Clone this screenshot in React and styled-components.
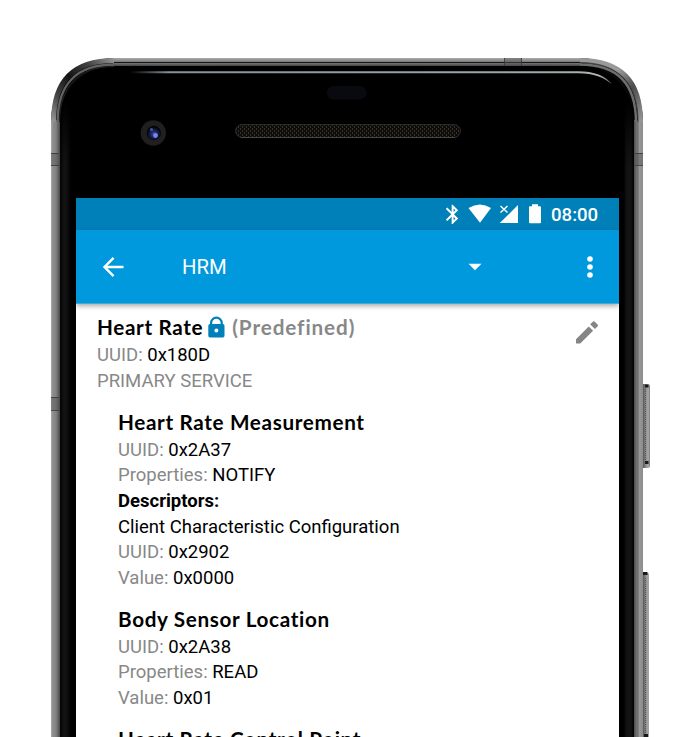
import React from "react";
import styled, { createGlobalStyle } from "styled-components";

const GlobalStyle = createGlobalStyle`
  * { box-sizing: border-box; }
  body { margin: 0; background: #fff; overflow: hidden; }
`;

const Stage = styled.main`
  width: 700px;
  height: 737px;
  padding: 58px 0 0 51px;
  overflow: hidden;
  background: #fff;
  font-family: Roboto, "Liberation Sans", sans-serif;
`;

const Phone = styled.div`
  position: relative;
  width: 592px;
  height: 760px;
`;

const Hull = styled.div`
  height: 100%;
  padding: 8px 9px 0;
  border-radius: 63px 63px 0 0;
  background:
    linear-gradient(to bottom, #aaa 0, #888 3px, #777 4px, #151515 4px, #151515 5px, #777 5px, #444 8px, transparent 8px) 62px 0 / 468px 8px no-repeat,
    linear-gradient(to right, #aaa 0, #8b8b8b 2px, #828282 5px, #656565 7px, #484848 9px, transparent 9px, transparent 583px, #4c4c4c 583px, #777 586px, #666 587px, #999 588px, #8c8c8c 592px) 0 62px no-repeat,
    #080808;
`;

const Glass = styled.div`
  height: 100%;
  padding: 132px 16px 0;
  border-radius: 54px 54px 0 0;
  background:
    linear-gradient(to bottom, #000 30px, transparent 100px),
    linear-gradient(to right, #090909, #171717 4px, #101010 7px, #000 11px, #000 564px, #111 566px, #181816 571px, #050505 574px);
  box-shadow: inset 0 6px 7px #000;
`;

const HardwareArt = styled.svg`
  position: absolute;
  left: -51px;
  top: -58px;
  pointer-events: none;
`;

const Screen = styled.section`
  width: 543px;
  height: 620px;
  overflow: hidden;
  background: #fff;
`;

const StatusBar = styled.div`
  display: flex;
  height: 32px;
  align-items: center;
  justify-content: flex-end;
  padding-right: 20px;
  background: #0080b9;
  color: #fff;
`;

const StatusIcons = styled.svg`
  display: block;
  width: 100px;
  height: 32px;
`;

const Clock = styled.time`
  width: 48px;
  margin-left: 7px;
  padding-top: 2px;
  font-size: 18.6px;
  font-weight: 500;
  white-space: nowrap;
`;

const Toolbar = styled.header`
  display: flex;
  height: 74px;
  align-items: center;
  padding: 0 21px 0 25px;
  background: #0099dd;
  border-bottom: 1px solid #45a9d6;
  box-shadow: 0 2px 5px rgba(0, 0, 0, 0.35);
  color: #fff;
`;

const ToolIcon = styled.svg`
  display: block;
  flex: none;
  width: ${(p) => p.$w}px;
  height: 24px;
  fill: currentColor;
`;

const Spinner = styled.div`
  display: flex;
  flex: 1;
  align-items: center;
  justify-content: space-between;
  margin: 0 100px 0 57px;
  font-size: 20.3px;
`;

const Content = styled.div`
  padding: 10px 21px 0;
`;

const Service = styled.div`
  display: flex;
  justify-content: space-between;
  margin-bottom: 15.3px;
`;

const Group = styled.article`
  margin: 0 0 15px 21px;
`;

const Heading = styled.h2`
  display: flex;
  align-items: center;
  height: 28px;
  padding-bottom: 1px;
  margin: 0;
  color: #000;
  font-family: Lato, "Open Sans", sans-serif;
  font-size: 20.7px;
  font-weight: 700;
  letter-spacing: 0.65px;
  line-height: 27px;
  white-space: nowrap;
`;

const Predefined = styled.span`
  color: #888;
  letter-spacing: 0.9px;
`;

const Lock = styled.svg`
  width: 17px;
  height: 22px;
  margin: 0 7px 2px 5px;
  fill: #0080b9;
`;

const Line = styled.div`
  height: 25.7px;
  color: ${(p) => (p.$muted ? "#888" : "#000")};
  font-size: 18.5px;
  font-weight: ${(p) => (p.$bold ? 700 : 400)};
  line-height: 26px;
  white-space: nowrap;
`;

const Label = styled.span`
  color: #888;
`;

const Pencil = styled.svg`
  width: 23px;
  height: 23px;
  margin: 7px -1px 0 0;
  fill: #858585;
`;

function Field({ label, value }) {
  return <Line><Label>{label}:</Label> {value}</Line>;
}

function Hardware() {
  return (
    <HardwareArt width="700" height="737" viewBox="0 0 700 737" fill="none" aria-hidden="true">
      <defs>
        <linearGradient id="cornerL" x1="51" y1="121" x2="114" y2="58" gradientUnits="userSpaceOnUse">
          <stop stopColor="#999" /><stop offset=".25" stopColor="#444" /><stop offset=".5" stopColor="#141414" /><stop offset=".75" stopColor="#444" /><stop offset="1" stopColor="#999" />
        </linearGradient>
        <linearGradient id="cornerR" x1="580" y1="58" x2="643" y2="121" gradientUnits="userSpaceOnUse">
          <stop stopColor="#999" /><stop offset=".4" stopColor="#999" /><stop offset=".65" stopColor="#4c4c4c" /><stop offset="1" stopColor="#999" />
        </linearGradient>
        <linearGradient id="glare" x1="130" y1="0" x2="613" y2="0" gradientUnits="userSpaceOnUse">
          <stop stopColor="#879198" stopOpacity="0" /><stop offset=".08" stopColor="#879198" /><stop offset=".88" stopColor="#a1a9ac" /><stop offset=".97" stopColor="#b0b5b6" /><stop offset="1" stopColor="#666" />
        </linearGradient>
        <linearGradient id="key" x1="643" y1="0" x2="650" y2="0" gradientUnits="userSpaceOnUse">
          <stop stopColor="#555" /><stop offset=".4" stopColor="#8c8c8c" /><stop offset=".75" stopColor="#aaa" /><stop offset="1" stopColor="#777" />
        </linearGradient>
        <radialGradient id="lens" cx="154" cy="134" r="7" gradientUnits="userSpaceOnUse">
          <stop stopColor="#3b4a98" /><stop offset=".55" stopColor="#17204e" /><stop offset="1" stopColor="#030408" />
        </radialGradient>
        <pattern id="mesh" width="4" height="4" patternUnits="userSpaceOnUse">
          <path d="M0 0h4v4H0z" fill="#0d0c0b" /><path d="M0 0h1v2H0zM2 2h1v2H2z" fill="#363129" />
        </pattern>
      </defs>
      <path d="M53.5 122C53.5 81 74 60.5 114 60.5" stroke="url(#cornerL)" strokeWidth="5" />
      <path d="M57.6 122C57.6 84 77 64.5 114 64.5" stroke="#626262" strokeWidth="2.4" />
      <path d="M59.5 122C59.8 86 79 66.5 114 66.5" stroke="#262626" strokeWidth="1" />
      <path d="M580 60.5C620 60.5 640.5 81 640.5 122" stroke="url(#cornerR)" strokeWidth="5" />
      <path d="M580 64.5C617 64.5 636 84 636 122" stroke="#6e6e6e" strokeWidth="2.4" />
      <path d="M580 62.6C618 62.6 638 83 638 122" stroke="#3a3a3a" strokeWidth="1" />
      <path d="M130 71.2H578C594 71.3 606 75.5 612 84.5C604 77 594 73.4 578 73.2H130Z" fill="url(#glare)" />
      <path d="M504 58h18v8h-18zM51 153h8v13h-8zM51 397h8v13h-8zM635 153h8v12h-8z" fill="#555" fillOpacity=".45" />
      <path d="M504.5 58v8M521.5 58v8M51 153.5h8M51 165.5h8M51 397.5h8M51 410.5h8M635 153.5h8M635 165.5h8" stroke="#333" strokeOpacity=".75" />
      <path d="M643 384h5q2 0 2 3v78q0 3-2 3h-5zM643 573h5q1 0 1 2v162h-6z" fill="url(#key)" />
      <path d="M645 384.5h3.5v3H645zM645 461h3.5v3H645zM643 572h4.5v3H643zM644 734h4v3h-4z" fill="#191919" />
      <path d="M645.5 389v71M645.5 578v155" stroke="#555" strokeDasharray="1 1" />
      <rect x="327" y="86" width="39.5" height="13.5" rx="6.5" fill="#090a0f" />
      <circle cx="153.3" cy="133" r="12.7" fill="#201e1e" />
      <circle cx="154" cy="133" r="10" stroke="#292727" strokeDasharray="1 2" />
      <circle cx="153.8" cy="133" r="7.2" fill="url(#lens)" />
      <circle cx="151.5" cy="129.5" r="1.5" fill="#4256a4" />
      <circle cx="155.5" cy="135.5" r="2.4" fill="#7587ef" />
      <rect x="235.5" y="124.5" width="225" height="13" rx="6.5" fill="url(#mesh)" stroke="#2a2928" />
      <path d="M241 137.5h214" stroke="#4c4842" />
    </HardwareArt>
  );
}

function SystemIcons() {
  return (
    <StatusIcons viewBox="444 198 100 32" fill="#fff" aria-hidden="true">
      <path transform="translate(441 202.8) scale(.97 .96)" d="M17.71 7.71L12 2h-1v7.59L6.41 5 5 6.41 10.59 12 5 17.59 6.41 19 11 14.41V22h1l5.71-5.71-4.3-4.29zM13 5.83l1.88 1.88L13 9.59zm1.88 10.46L13 18.17v-3.76z" />
      <path d="M468.5 208Q480 201 491 208L480 222.7Z" />
      <path d="M518 205v18h-18.2z" />
      <path d="M509 202v9l-7 6V204z" fill="#0080b9" />
      <path d="M500.5 206l7 6.5M507.5 206l-7 6.5" stroke="#fff" strokeWidth="1.4" />
      <path d="M532 204.3h6v2h2q1 0 1 1v15q0 1-1 1h-10q-1 0-1-1v-15q0-1 1-1h2z" />
    </StatusIcons>
  );
}

export default function App() {
  return (
    <>
      <GlobalStyle />
      <Stage>
        <Phone>
          <Hull>
            <Glass>
              <Screen>
                <StatusBar><SystemIcons /><Clock>08:00</Clock></StatusBar>
                <Toolbar>
                  <ToolIcon $w={24} viewBox="0 0 24 24"><path d="M22.5 10.7H6.4l7-7L11.7 2 1.8 12l9.9 10 1.7-1.7-7-7h16.1z" /></ToolIcon>
                  <Spinner>
                    <span>HRM</span>
                    <ToolIcon $w={14} viewBox="0 0 14 24"><path d="M.5 8.8h13L7 15.2z" /></ToolIcon>
                  </Spinner>
                  <ToolIcon $w={16} viewBox="0 0 16 24"><circle cx="8" cy="4" r="2.8" /><circle cx="8" cy="12" r="2.8" /><circle cx="8" cy="20" r="2.8" /></ToolIcon>
                </Toolbar>
                <Content>
                  <Service>
                    <div>
                      <Heading>
                        Heart Rate
                        <Lock viewBox="0 0 17 22"><path fillRule="evenodd" d="M2 8V7a6.2 6.2 0 0 1 12.8 0v1q1.7 0 1.7 1.7v10q0 1.7-1.7 1.7H2q-1.7 0-1.7-1.7v-10Q.3 8 2 8Zm2.2 0h8.4V7a4.2 4.2 0 0 0-8.4 0Zm4.2 4.6a2 2 0 1 0 0 4 2 2 0 0 0 0-4Z" /></Lock>
                        <Predefined>(Predefined)</Predefined>
                      </Heading>
                      <Field label="UUID" value="0x180D" />
                      <Line $muted>PRIMARY SERVICE</Line>
                    </div>
                    <Pencil viewBox="0 0 23 23"><path d="M0 18.2v4.3h4.3L17.1 9.8l-4.4-4.4zM21.5 5.4q1-1 0-2L18.8.7q-1-1-2 0L14.2 3.2l4.7 4.7z" /></Pencil>
                  </Service>
                  <Group>
                    <Heading>Heart Rate Measurement</Heading>
                    <Field label="UUID" value="0x2A37" />
                    <Field label="Properties" value="NOTIFY" />
                    <Line $bold>Descriptors:</Line>
                    <Line>Client Characteristic Configuration</Line>
                    <Field label="UUID" value="0x2902" />
                    <Field label="Value" value="0x0000" />
                  </Group>
                  <Group>
                    <Heading>Body Sensor Location</Heading>
                    <Field label="UUID" value="0x2A38" />
                    <Field label="Properties" value="READ" />
                    <Field label="Value" value="0x01" />
                  </Group>
                  <Group><Heading>Heart Rate Control Point</Heading></Group>
                </Content>
              </Screen>
            </Glass>
          </Hull>
          <Hardware />
        </Phone>
      </Stage>
    </>
  );
}
